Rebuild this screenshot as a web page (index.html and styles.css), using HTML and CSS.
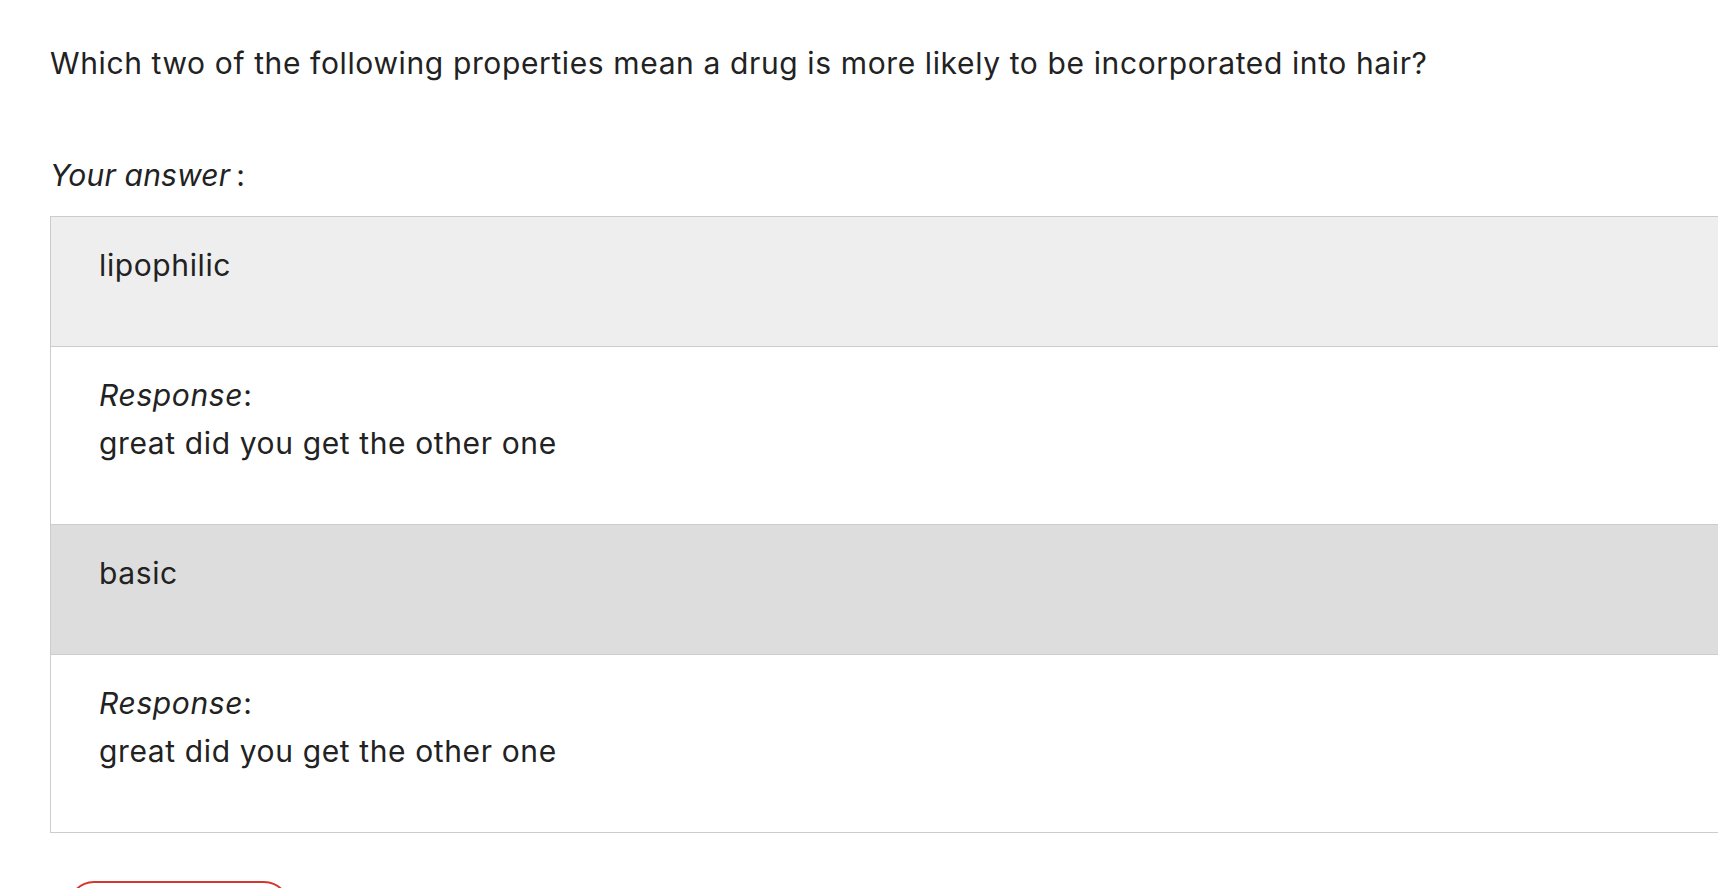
FILE: index.html
```html
<!DOCTYPE html>
<html lang="en">
<head>
<meta charset="utf-8">
<title>Question review</title>
<link rel="stylesheet" href="styles.css">
</head>
<body>
<main class="page">
  <p class="question">Which two of the following properties mean a drug is more likely to be incorporated into hair?</p>
  <p class="label"><em class="label-text">Your answer</em>:</p>
  <div class="answers">
    <div class="row row-choice">
      <p class="line">lipophilic</p>
    </div>
    <div class="row row-response">
      <p class="line"><em>Response</em>:</p>
      <p class="line">great did you get the other one</p>
    </div>
    <div class="row row-choice row-choice-dark">
      <p class="line">basic</p>
    </div>
    <div class="row row-response">
      <p class="line"><em>Response</em>:</p>
      <p class="line">great did you get the other one</p>
    </div>
  </div>
  <button class="btn" type="button">Try again</button>
</main>
</body>
</html>
```

FILE: styles.css
```css
html, body {
  margin: 0;
  padding: 0;
  overflow: hidden;
  background: #ffffff;
}

body {
  font-family: Inter, "Noto Sans", "Liberation Sans", sans-serif;
  font-size: 30px;
  line-height: 48px;
  letter-spacing: 0.62px;
  color: #222222;
}

.page {
  padding: 39px 0 0 50px;
}

.question {
  margin: 0;
}

.label {
  margin: 64px 0 0;
}

.label em,
.line em {
  font-style: italic;
}

.label-text {
  letter-spacing: 0.2px;
  margin-right: 6px;
}

.answers {
  margin-top: 17px;
  width: 1800px;
  border: 1px solid #cccccc;
  display: flex;
  flex-direction: column;
}

.row {
  padding: 24px 48px 57px 48px;
  border-top: 1px solid #cccccc;
}

.row:first-child {
  border-top: none;
}

.row-choice {
  background: #eeeeee;
}

.row-choice-dark {
  background: #dddddd;
}

.row-response {
  background: #ffffff;
}

.line {
  margin: 0;
}

.btn {
  display: block;
  margin: 48px 0 0 18px;
  width: 222px;
  height: 52px;
  border: 2px solid #d4372c;
  border-radius: 26px;
  background: #ffffff;
  color: #d4372c;
  font-family: inherit;
  font-size: 20px;
}
```
